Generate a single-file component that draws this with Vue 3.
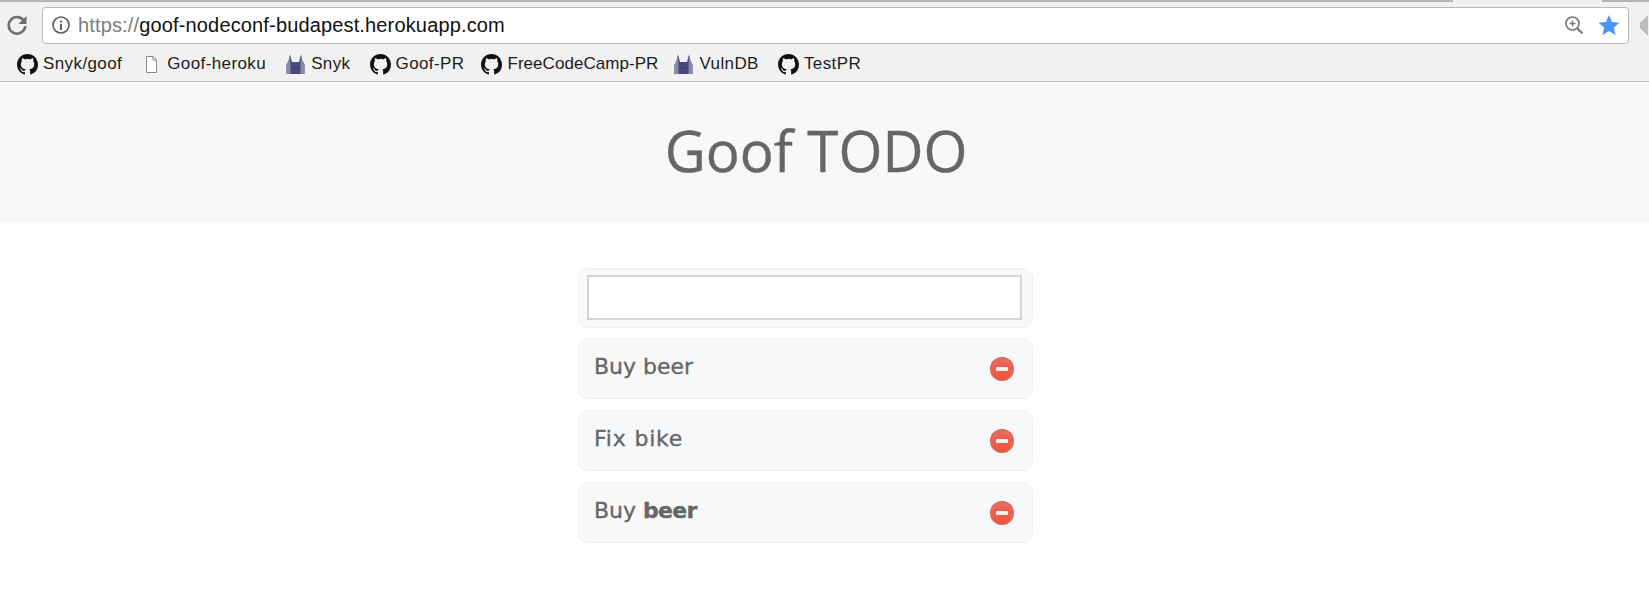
<script setup>
const github = 'M8 0C3.58 0 0 3.58 0 8c0 3.54 2.29 6.53 5.47 7.59.4.07.55-.17.55-.38 0-.19-.01-.82-.01-1.49-2.01.37-2.53-.49-2.69-.94-.09-.23-.48-.94-.82-1.13-.28-.15-.68-.52-.01-.53.63-.01 1.08.58 1.23.82.72 1.21 1.87.87 2.33.66.07-.52.28-.87.51-1.07-1.78-.2-3.64-.89-3.64-3.95 0-.87.31-1.59.82-2.15-.08-.2-.36-1.02.08-2.12 0 0 .67-.21 2.2.82.64-.18 1.32-.27 2-.27.68 0 1.36.09 2 .27 1.53-1.04 2.2-.82 2.2-.82.44 1.1.16 1.92.08 2.12.51.56.82 1.27.82 2.15 0 3.07-1.87 3.75-3.65 3.95.29.25.54.73.54 1.48 0 1.07-.01 1.93-.01 2.2 0 .21.15.46.55.38A8.013 8.013 0 0016 8c0-4.42-3.58-8-8-8z'
const bookmarks = [
  { label: 'Snyk/goof', icon: 'github' },
  { label: 'Goof-heroku', icon: 'file' },
  { label: 'Snyk', icon: 'snyk' },
  { label: 'Goof-PR', icon: 'github' },
  { label: 'FreeCodeCamp-PR', icon: 'github', tight: true },
  { label: 'VulnDB', icon: 'snyk' },
  { label: 'TestPR', icon: 'github' }
]
const todos = [
  { plain: 'Buy beer', bold: '' },
  { plain: 'Fix bike', bold: '', wide: true },
  { plain: 'Buy ', bold: 'beer' }
]
</script>

<template>
  <div class="page">
    <div class="tabstrip">
      <span class="strip a"></span><span class="strip b"></span><span class="strip c"></span>
    </div>
    <div class="toolbar">
      <svg class="reload" viewBox="0 0 24 24" width="24" height="24">
        <path d="M19.2 8.2A8.3 8.3 0 1 0 20.3 13" fill="none" stroke="#6f6f6f" stroke-width="2.6"/>
        <path d="M21.5 3v8h-8z" fill="#6f6f6f"/>
      </svg>
      <div class="omnibox">
        <svg class="info" viewBox="0 0 20 20" width="20" height="20">
          <circle cx="10" cy="10" r="8" fill="none" stroke="#5f5f5f" stroke-width="1.7"/>
          <rect x="9" y="9" width="2" height="6" fill="#5f5f5f"/>
          <rect x="9" y="5.5" width="2" height="2" fill="#5f5f5f"/>
        </svg>
        <span class="url"><span class="scheme">https://</span>goof-nodeconf-budapest.herokuapp.com</span>
        <svg class="zoom" viewBox="0 0 20 20" width="20" height="20">
          <circle cx="8.5" cy="8.5" r="6.5" fill="none" stroke="#777" stroke-width="1.7"/>
          <path d="M13.5 13.5l5 5" stroke="#777" stroke-width="2.2"/>
          <path d="M8.5 5.5v6M5.5 8.5h6" stroke="#777" stroke-width="1.4"/>
        </svg>
        <svg class="star" viewBox="0 0 22 22" width="22" height="22">
          <path d="M11 1l3 7 7.500.7-5.700 4.900 1.700 7.400L11 17.100 4.500 21l1.700-7.400L.5 8.700 8 8z" fill="#4596fb"/>
        </svg>
      </div>
      <svg class="ext" viewBox="0 0 10 24" width="10" height="24">
        <path d="M10 2L2 10v5l8 8z" fill="#bdbdbd"/>
      </svg>
    </div>
    <div class="bookmarks">
      <div v-for="b in bookmarks" :key="b.label" class="bookmark" :class="{ tight: b.tight }">
        <svg v-if="b.icon === 'github'" viewBox="0 0 16 16" width="21" height="21">
          <path :d="github" fill="#111"/>
        </svg>
        <svg v-else-if="b.icon === 'file'" viewBox="0 0 21 21" width="21" height="21">
          <path d="M5.500 2.500h6.500l3.500 3.500v12.500h-10z" fill="#fff" stroke="#8a8a8a"/>
          <path d="M12 2.500v3.500h3.500" fill="none" stroke="#8a8a8a"/>
        </svg>
        <svg v-else viewBox="0 0 21 21" width="21" height="21">
          <path d="M1.500 20V10.500L3.500 7 5 .5 7 8h7l2-7.500L17.500 7l2 3.500V20z" fill="#4a4a80"/>
          <path d="M1.500 20V10.500L3.500 7 5 .5l.6 19.500zM19.500 20V10.500L17.500 7 16 .5l-.6 19.500z" fill="#8a8aa0"/>
          <path d="M7.500 13l2 1.500M13.500 13l-2 1.500" stroke="#22224a" stroke-width="1"/>
        </svg>
        <span class="bm-label">{{ b.label }}</span>
      </div>
    </div>
    <header class="banner">
      <h1>Goof TODO</h1>
    </header>
    <main class="list">
      <div class="card input-card">
        <input class="new-todo" type="text" />
      </div>
      <div v-for="(t, i) in todos" :key="i" class="card todo">
        <span class="todo-text" :class="{ wide: t.wide }">{{ t.plain }}<strong v-if="t.bold">{{ t.bold }}</strong></span>
        <span class="remove"><span class="dash"></span></span>
      </div>
    </main>
  </div>
</template>

<style>
html, body { margin: 0; background: #fff; overflow: hidden; }
</style>

<style scoped>
.page {
  width: 1649px;
  height: 593px;
  display: flex;
  flex-direction: column;
  background: #fff;
  overflow: hidden;
}
.tabstrip {
  height: 2px;
  display: flex;
  background: #f1f1f1;
}
.strip.a { width: 1453px; background: #b4b4b4; }
.strip.b { width: 149px; }
.strip.c { flex: 1; background: #b4b4b4; }
.toolbar {
  height: 45px;
  background: #f1f1f1;
  display: flex;
  align-items: center;
  padding-left: 5px;
  box-sizing: border-box;
  padding-top: 1px;
}
.reload { flex: none; }
.omnibox {
  width: 1587px;
  height: 37px;
  margin-left: 13px;
  box-sizing: border-box;
  background: #fff;
  border: 1px solid #b9b9b9;
  border-radius: 4px;
  display: flex;
  align-items: center;
  padding: 0 8px 0 8px;
}
.info { flex: none; }
.url {
  font: 20px "Liberation Sans", Arial, sans-serif;
  letter-spacing: 0.15px;
  color: #111;
  margin-left: 7px;
  flex: 1;
}
.scheme { color: #7d7d7d; }
.zoom { margin-right: 14px; }
.ext { margin-left: 9px; flex: none; }
.bookmarks {
  height: 34px;
  background: #f1f1f1;
  border-bottom: 1px solid #bdbdbd;
  display: flex;
  align-items: center;
  gap: 19px;
  padding-left: 17px;
}
.bookmark {
  display: flex;
  align-items: center;
  gap: 5px;
}
.bookmark.tight {
  margin-left: -2px;
  margin-right: -4px;
}
.bm-label {
  font: 17px "Liberation Sans", Arial, sans-serif;
  letter-spacing: 0.4px;
  color: #1c1c1c;
  white-space: nowrap;
}
.bookmark.tight .bm-label { letter-spacing: 0.05px; }
.banner {
  height: 141px;
  background: #f8f8f8;
  display: flex;
  align-items: center;
  justify-content: center;
  padding-right: 17px;
}
.banner h1 {
  margin: 0 0 4px;
  font: 400 56.5px "Open Sans", sans-serif;
  -webkit-text-stroke: 0.4px #666;
  color: #666;
}
.list {
  width: 455px;
  margin: 45px 0 0 578px;
  display: flex;
  flex-direction: column;
  gap: 11px;
}
.card {
  box-sizing: border-box;
  background: #f8f9fa;
  border: 1px solid #f0f0f0;
  border-radius: 10px;
}
.input-card {
  height: 60px;
  padding: 6px 10px 6px 8px;
  margin-bottom: -1px;
}
.new-todo {
  display: block;
  width: 100%;
  height: 45px;
  box-sizing: border-box;
  background: #fff;
  border: 2px solid #d6d6d6;
  outline: none;
  padding: 0;
}
.todo {
  height: 61px;
  display: flex;
  align-items: center;
  justify-content: space-between;
  padding: 0 18px 0 15px;
}
.todo-text {
  font: 22px "DejaVu Sans", sans-serif;
  -webkit-text-stroke: 0.35px #666;
  color: #666;
  margin-top: -5px;
}
.todo-text.wide { letter-spacing: 0.8px; }
.todo-text strong { font-weight: 700; letter-spacing: -0.7px; }
.remove {
  width: 24px;
  height: 24px;
  border-radius: 50%;
  background: radial-gradient(circle at 50% 70%, #ef5340 0%, #e9604f 50%, #e07a6c 85%, #eb9a90 100%);
  box-shadow: inset 0 1px 1px #d9604f;
  box-sizing: border-box;
  display: flex;
  align-items: center;
  justify-content: center;
  margin-top: 1px;
}
.dash {
  width: 12px;
  height: 4px;
  background: #fdf1ef;
  border-radius: 1px;
}
</style>
